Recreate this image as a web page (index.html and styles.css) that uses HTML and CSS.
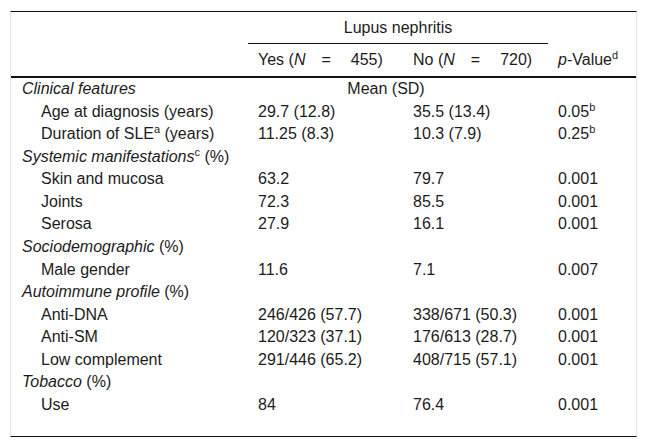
FILE: index.html
```html
<!DOCTYPE html>
<html lang="en">
<head>
<meta charset="utf-8">
<title>Lupus nephritis table</title>
<link rel="stylesheet" href="styles.css">
</head>
<body>
<div class="wrap">
<table class="tbl">
<colgroup>
<col class="c1"><col class="c2"><col class="c3"><col class="c4">
</colgroup>
<thead>
<tr class="h1">
<th></th>
<th colspan="2" class="span">Lupus nephritis</th>
<th></th>
</tr>
<tr class="h2">
<th></th>
<th>Yes (<i>N</i>&emsp;=&emsp;&#8197;455)</th>
<th>No (<i>N</i>&emsp;=&emsp;&#8197;720)</th>
<th><i>p</i>-Value<sup>d</sup></th>
</tr>
</thead>
<tbody>
<tr><td class="sec"><i>Clinical features</i></td><td colspan="2" class="mid">Mean (SD)</td><td></td></tr>
<tr><td class="sub">Age at diagnosis (years)</td><td>29.7 (12.8)</td><td>35.5 (13.4)</td><td>0.05<sup>b</sup></td></tr>
<tr><td class="sub">Duration of SLE<sup>a</sup> (years)</td><td>11.25 (8.3)</td><td>10.3 (7.9)</td><td>0.25<sup>b</sup></td></tr>
<tr><td class="sec"><i>Systemic manifestations</i><sup>c</sup> (%)</td><td></td><td></td><td></td></tr>
<tr><td class="sub">Skin and mucosa</td><td>63.2</td><td>79.7</td><td>0.001</td></tr>
<tr><td class="sub">Joints</td><td>72.3</td><td>85.5</td><td>0.001</td></tr>
<tr><td class="sub">Serosa</td><td>27.9</td><td>16.1</td><td>0.001</td></tr>
<tr><td class="sec"><i>Sociodemographic</i> (%)</td><td></td><td></td><td></td></tr>
<tr><td class="sub">Male gender</td><td>11.6</td><td>7.1</td><td>0.007</td></tr>
<tr><td class="sec"><i>Autoimmune profile</i> (%)</td><td></td><td></td><td></td></tr>
<tr><td class="sub">Anti-DNA</td><td>246/426 (57.7)</td><td>338/671 (50.3)</td><td>0.001</td></tr>
<tr><td class="sub">Anti-SM</td><td>120/323 (37.1)</td><td>176/613 (28.7)</td><td>0.001</td></tr>
<tr><td class="sub">Low complement</td><td>291/446 (65.2)</td><td>408/715 (57.1)</td><td>0.001</td></tr>
<tr><td class="sec"><i>Tobacco</i> (%)</td><td></td><td></td><td></td></tr>
<tr><td class="sub">Use</td><td>84</td><td>76.4</td><td>0.001</td></tr>
</tbody>
</table>
</div>
</body>
</html>
```
FILE: styles.css
```css
html, body {
  margin: 0;
  padding: 0;
  background: #ffffff;
}

body {
  font-family: "Liberation Sans", Arial, sans-serif;
  font-size: 16px;
  color: #1c1c1c;
}

.wrap {
  margin: 11px 0 0 10px;
  width: 627px;
  box-sizing: border-box;
  border-left: 1px solid #e6e6e6;
  border-right: 1px solid #e6e6e6;
  border-top: 1px solid #111111;
  border-bottom: 1px solid #111111;
  padding-bottom: 20px;
}

.tbl {
  width: 625px;
  table-layout: fixed;
  border-collapse: separate;
  border-spacing: 0;
}

.c1 { width: 237px; }
.c2 { width: 155px; }
.c3 { width: 145px; }
.c4 { width: 88px; }

.tbl th,
.tbl td {
  padding: 0 0 0 10px;
  text-align: left;
  font-weight: normal;
  white-space: nowrap;
  vertical-align: middle;
}

.h1 th {
  height: 32px;
  line-height: 31px;
  box-sizing: border-box;
}

.h1 th.span {
  text-align: center;
  padding: 0;
  border-bottom: 1px solid #111111;
}

.h2 th {
  line-height: 32px;
  border-bottom: 2px solid #111111;
}

.tbl td {
  line-height: 22.57px;
  height: 22.57px;
}

.tbl td.sec {
  padding-left: 11px;
}

.tbl td.sub {
  padding-left: 30px;
}

.tbl td.mid {
  text-align: center;
  padding: 0 24px 0 0;
}

sup {
  font-size: 11px;
  line-height: 0;
  vertical-align: 6px;
}
```
